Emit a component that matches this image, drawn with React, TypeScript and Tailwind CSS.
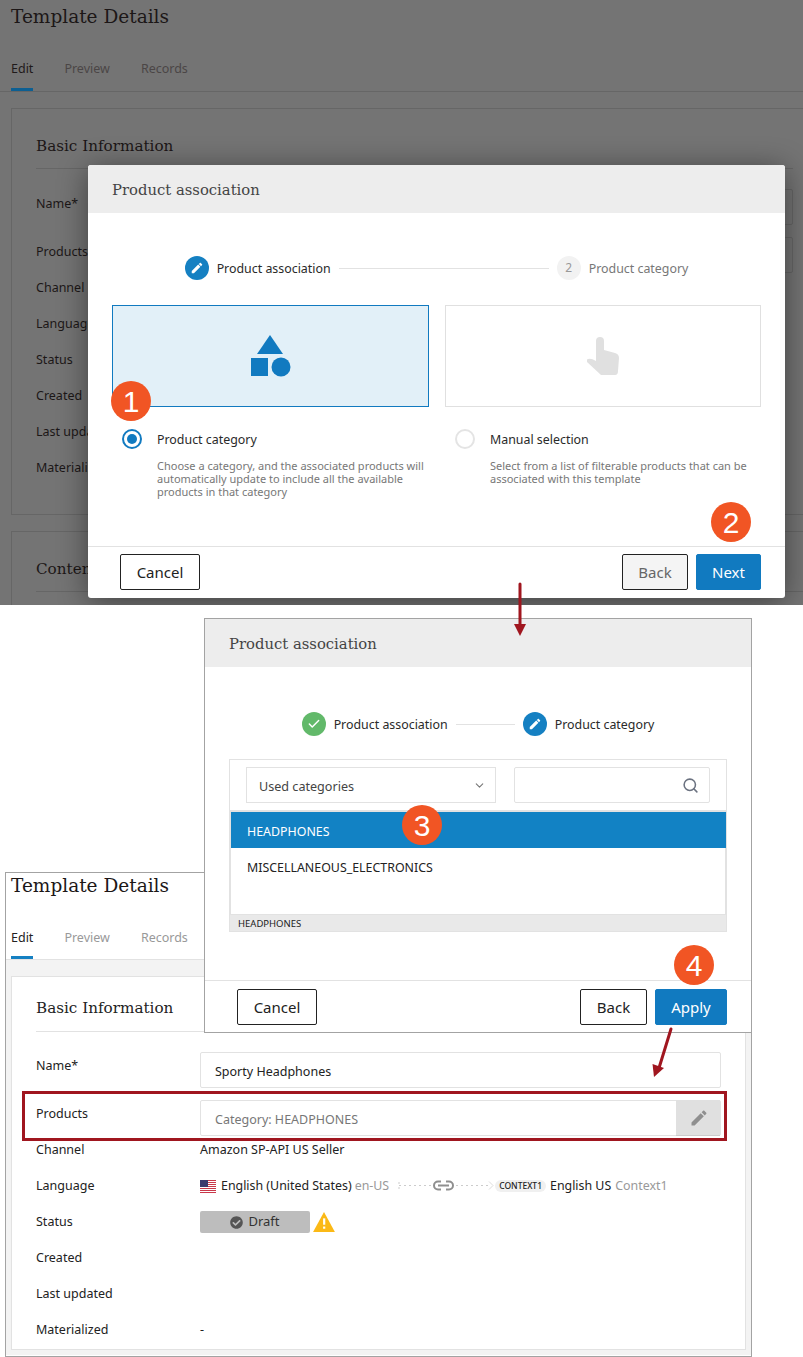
import type { ReactNode } from "react";
import { Check, ChevronDown, Search } from "lucide-react";
import { FaCheckCircle } from "react-icons/fa";

const ROWS = ["Channel", "Language", "Status", "Created", "Last updated", "Materialized"];

function PencilIcon({ className }: { className: string }) {
  return (
    <svg viewBox="0 0 24 24" className={className} fill="currentColor">
      <path d="M3 17.25V21h3.75L17.81 9.94l-3.75-3.75L3 17.25zM20.71 7.04c.39-.39.39-1.02 0-1.41l-2.34-2.34c-.39-.39-1.02-.39-1.41 0l-1.83 1.83 3.75 3.75 1.83-1.83z" />
    </svg>
  );
}

function HandIcon() {
  return (
    <svg viewBox="0 0 32 38" className="h-[38px] w-8 text-[#e0e0e0]" fill="currentColor">
      <path d="M9 4a4 4 0 0 1 8 0V13L28 16q4 1 4 5L31 34q0 4-3 4H14L0 25q-1-2 1-3q3-1 8 2Z" />
    </svg>
  );
}

function StepCircle({ kind }: { kind: "edit" | "done" | "todo" }) {
  if (kind === "done") {
    return (
      <span className="flex h-6 w-6 items-center justify-center rounded-full bg-[#62b96a] text-white">
        <Check size={14} strokeWidth={2.5} />
      </span>
    );
  }
  if (kind === "todo") {
    return <span className="flex h-6 w-6 items-center justify-center rounded-full bg-[#f2f2f2] text-[12px] text-[#999]">2</span>;
  }
  return (
    <span className="flex h-6 w-6 items-center justify-center rounded-full bg-[#1580c2] text-white">
      <PencilIcon className="h-[14px] w-[14px]" />
    </span>
  );
}

function Step({ kind, label, muted }: { kind: "edit" | "done" | "todo"; label: string; muted?: boolean }) {
  return (
    <div className="flex items-center gap-2">
      <StepCircle kind={kind} />
      <span className={muted ? "pt-[3px] text-[12.4px] text-[#777]" : "pt-[3px] text-[12.4px] text-[#2a2a2a]"}>{label}</span>
    </div>
  );
}

function ModalHeader() {
  return (
    <div className="flex h-12 items-center bg-[#ededed] px-6 pt-[2px] font-['DejaVu_Serif',serif] text-[14.8px] text-[#444]">
      Product association
    </div>
  );
}

function Button({ children, primary, muted, width }: { children: ReactNode; primary?: boolean; muted?: boolean; width: string }) {
  let cls = "border-[#222] bg-white text-[#222]";
  if (primary) cls = "border-[#117ac0] bg-[#117ac0] text-white";
  if (muted) cls = "border-[#222] bg-[#f4f4f4] text-[#666]";
  return <div className={`flex h-9 items-center justify-center rounded-[2px] border text-[15px] ${cls} ${width}`}>{children}</div>;
}

function ChoiceColumn({ active, title, text }: { active?: boolean; title: string; text: ReactNode }) {
  return (
    <div className="flex flex-col">
      <div
        className={
          active
            ? "flex h-[102px] items-center justify-center border border-[#117ac0] bg-[#e2f0f8]"
            : "flex h-[102px] items-center justify-center border border-[#e0e0e0] bg-white"
        }
      >
        {active ? (
          <svg viewBox="0 0 42 42" className="h-[42px] w-[42px] text-[#117ac0]" fill="currentColor">
            <path d="M20 0 L33 19 L7 19 Z" />
            <rect x="1" y="23" width="17" height="18" />
            <circle cx="31" cy="32" r="9.5" />
          </svg>
        ) : (
          <HandIcon />
        )}
      </div>
      <div className="mt-[22px] flex gap-[15px] pl-[10px]">
        {active ? (
          <span className="flex h-5 w-5 shrink-0 items-center justify-center rounded-full border-2 border-[#117ac0]">
            <span className="h-[10px] w-[10px] rounded-full bg-[#117ac0]" />
          </span>
        ) : (
          <span className="h-5 w-5 shrink-0 rounded-full border-2 border-[#e4e4e4]" />
        )}
        <div className="pt-px">
          <div className="text-[12.4px] leading-5 text-[#2a2a2a]">{title}</div>
          <div className="mt-[9px] text-[11px] leading-[13px] text-[#777]">{text}</div>
        </div>
      </div>
    </div>
  );
}

function Marker({ n, className }: { n: number; className: string }) {
  return (
    <div className={`absolute flex h-10 w-10 items-center justify-center rounded-full bg-[#f15524] font-['Liberation_Sans',sans-serif] text-[30px] text-white ${className}`}>
      {n}
    </div>
  );
}

function PageTabs({ dim }: { dim?: boolean }) {
  return (
    <div className={dim ? "flex h-[52px] items-end border-b border-[#666] pl-[11px]" : "flex h-[52px] items-end border-b border-[#e2e2e2] pl-[5px]"}>
      <div className="flex gap-[31px] text-[12.5px]">
        <div className={dim ? "h-[31px] border-b-[3px] border-[#0d5f92] text-[#1f1a1a]" : "h-[30px] border-b-[3px] border-[#1580c2] text-[#222]"}>Edit</div>
        <div className={dim ? "text-[#4b4646]" : "text-[#999]"}>Preview</div>
        <div className={dim ? "text-[#4b4646]" : "text-[#999]"}>Records</div>
      </div>
    </div>
  );
}

function TopWindow() {
  return (
    <div className="absolute left-0 top-0 h-[605px] w-[803px] overflow-hidden bg-[#747474]">
      <div className="h-[32px] pl-[11px] pt-px font-['DejaVu_Serif',serif] text-[18.5px] leading-[32px] text-[#1c1717]">Template Details</div>
      <div className="h-[8px]" />
      <PageTabs dim />
      <div className="ml-[11px] mt-[16px] h-[407px] w-[800px] border border-[#666] pl-6 pr-[17px] pt-[17px] text-[12.5px] text-[#1c1717]">
        <div className="h-[43px] border-b border-[#666] font-['DejaVu_Serif',serif] text-[15.2px] leading-[40px]">Basic Information</div>
        <div className="mt-5 flex h-9 items-start justify-between">
          <span className="pt-[6px]">Name*</span>
          <span className="h-9 w-[80px] rounded-[2px] border border-[#666]" />
        </div>
        <div className="mt-3 flex h-9 items-start justify-between">
          <span className="pt-[6px]">Products</span>
          <span className="h-9 w-[80px] rounded-[2px] border border-[#666]" />
        </div>
        <div className="-mt-[3px]">
          {ROWS.map((row) => (
            <div key={row} className="flex h-9 items-center">
              {row}
            </div>
          ))}
        </div>
      </div>
      <div className="ml-[11px] mt-[16px] h-[80px] w-[800px] border border-[#666] pl-6 pt-[26px]">
        <div className="h-[34px] border-b border-[#666] font-['DejaVu_Serif',serif] text-[15.2px] text-[#1c1717]">Content</div>
      </div>

      {/* modal */}
      <div className="absolute left-[88px] top-[165px] w-[697px] overflow-hidden rounded-[3px] bg-white shadow-[0_4px_30px_rgba(0,0,0,0.45)]">
        <ModalHeader />
        <div className="h-[333px] px-6">
          <div className="flex items-center justify-center gap-2 pt-[43px]">
            <Step kind="edit" label="Product association" />
            <span className="h-px w-[210px] bg-[#e2e2e2]" />
            <Step kind="todo" label="Product category" muted />
          </div>
          <div className="mt-[25px] grid grid-cols-[317px_316px] gap-4">
            <ChoiceColumn
              active
              title="Product category"
              text={
                <>
                  Choose a category, and the associated products will
                  <br />
                  automatically update to include all the available
                  <br />
                  products in that category
                </>
              }
            />
            <ChoiceColumn
              title="Manual selection"
              text={
                <>
                  Select from a list of filterable products that can be
                  <br />
                  associated with this template
                </>
              }
            />
          </div>
        </div>
        <div className="flex h-[52px] items-start justify-between border-t border-[#e2e2e2] pl-8 pr-6 pt-[7px]">
          <Button width="w-[80px]">Cancel</Button>
          <div className="flex gap-2">
            <Button muted width="w-[66px]">Back</Button>
            <Button primary width="w-[65px]">Next</Button>
          </div>
        </div>
      </div>
    </div>
  );
}

function CategoryWindow() {
  return (
    <div className="absolute left-[204px] top-[618px] z-10 h-[415px] w-[548px] border border-[#a3a3a3] bg-white">
      <ModalHeader />
      <div className="px-6">
        <div className="flex items-center justify-center gap-2 pt-[45px]">
          <Step kind="done" label="Product association" />
          <span className="h-px w-[59px] bg-[#e2e2e2]" />
          <Step kind="edit" label="Product category" />
        </div>
        <div className="mt-[23px] flex h-[173px] flex-col border border-[#e2e2e2]">
          <div className="flex h-[50px] gap-[18px] pl-4 pt-[7px]">
            <div className="flex h-9 w-[250px] items-center justify-between border border-[#e2e2e2] pl-3 pr-[9px] text-[12.6px] text-[#444]">
              <span className="pt-1">Used categories</span>
              <ChevronDown size={13} className="text-[#777]" />
            </div>
            <div className="flex h-9 w-[196px] items-center justify-end rounded-[2px] border border-[#e2e2e2] pr-[10px]">
              <Search size={17} strokeWidth={2.2} className="text-[#6b7280]" />
            </div>
          </div>
          <div className="flex-1 border-x border-[#e2e2e2] border-t-2 text-[12.4px]">
            <div className="-mr-px flex h-9 items-center bg-[#1282c4] pl-4 pt-1 text-white">HEADPHONES</div>
            <div className="flex h-9 items-center pl-4 pt-1 text-[#222]">MISCELLANEOUS_ELECTRONICS</div>
          </div>
          <div className="flex h-[17px] items-center border-t border-[#e2e2e2] bg-[#e9e9e9] pl-2 pt-[3px] text-[9.5px] text-[#222]">HEADPHONES</div>
        </div>
      </div>
      <div className="mt-[48px] flex h-[52px] items-start justify-between border-t border-[#e2e2e2] pl-8 pr-6 pt-[8px]">
        <Button width="w-[80px]">Cancel</Button>
        <div className="flex gap-2">
          <Button width="w-[67px]">Back</Button>
          <Button primary width="w-[72px]">Apply</Button>
        </div>
      </div>
    </div>
  );
}

function UsFlag() {
  return (
    <svg viewBox="0 0 16 13" className="h-[13px] w-4">
      <rect width="16" height="13" fill="#fff" />
      <rect width="16" height="1" fill="#c9384a" />
      <rect y="2" width="16" height="1" fill="#c9384a" />
      <rect y="4" width="16" height="1" fill="#c9384a" />
      <rect y="6" width="16" height="1" fill="#c9384a" />
      <rect y="8" width="16" height="1" fill="#c9384a" />
      <rect y="10" width="16" height="1" fill="#c9384a" />
      <rect y="12" width="16" height="1" fill="#c9384a" />
      <rect width="8" height="7" fill="#3c3b6e" />
    </svg>
  );
}

function LanguageLink() {
  return (
    <svg viewBox="0 0 97 14" className="h-[14px] w-[97px]" fill="none">
      <path d="M1 3v7M1 6.500h33M58 6.500h35" stroke="#ccc" strokeDasharray="2 3" />
      <path d="M91 2.500l4 4-4 4" stroke="#ddd" />
      <path d="M43 2.500h-3a4 4 0 0 0 0 8h3M48 2.500h3a4 4 0 0 1 0 8h-3M40 6.500h11" stroke="#8f8f8f" strokeWidth="2" />
    </svg>
  );
}

function ResultWindow() {
  return (
    <div className="absolute left-[5px] top-[872px] h-[485px] w-[747px] border border-[#a3a3a3] bg-white text-[12.5px] text-[#222]">
      <div className="h-[27px] pl-[5px] font-['DejaVu_Serif',serif] text-[18.5px] leading-[26px] text-[#1c1717]">Template Details</div>
      <div className="h-[8px]" />
      <PageTabs />
      <div className="h-[395px] bg-[#f3f3f3] px-[5px] pt-[16px]">
        <div className="h-[374px] border border-[#e2e2e2] bg-white px-6 pt-[11px]">
          <div className="h-[44px] border-b border-[#e2e2e2] font-['DejaVu_Serif',serif] text-[15.2px] leading-[40px]">Basic Information</div>
          <div className="mt-5 grid grid-cols-[164px_1fr] items-start">
            <span className="pt-[5px]">Name*</span>
            <div className="flex h-9 items-center rounded-[2px] border border-[#e2e2e2] pl-[14px] pt-1 text-[12.5px]">Sporty Headphones</div>
          </div>
          <div className="mt-3 grid grid-cols-[164px_1fr] items-start">
            <span className="pt-[5px]">Products</span>
            <div className="flex h-9 items-center justify-between rounded-[2px] border border-[#e2e2e2] pl-[14px] text-[12.5px] text-[#777]">
              <span className="pt-1">Category: HEADPHONES</span>
              <span className="flex h-9 w-[44px] items-center justify-center border-b border-[#ccc] bg-[#e0e0e0] text-[#8f8f8f]">
                <PencilIcon className="ml-px h-5 w-5" />
              </span>
            </div>
          </div>
          <div className="-mt-1 grid grid-cols-[164px_1fr] items-center [&>*]:h-9 [&>*]:flex [&>*]:items-center">
            <span>Channel</span>
            <span>Amazon SP-API US Seller</span>
            <span>Language</span>
            <span className="text-[12.4px]">
              <UsFlag />
              <span className="ml-[5px]">English (United States)</span>
              <span className="ml-[3px] text-[#999]">en-US</span>
              <span className="ml-[9px]"><LanguageLink /></span>
              <span className="rounded-full bg-[#f0f0f0] px-[4px] text-[8.5px] font-medium leading-3">CONTEXT1</span>
              <span className="ml-[4px]">English US</span>
              <span className="ml-[4px] text-[#999]">Context1</span>
            </span>
            <span>Status</span>
            <span>
              <span className="flex h-[22px] w-[110px] items-center justify-center gap-[5px] rounded-[2px] bg-[#bdbdbd] text-[13px] text-[#333]">
                <FaCheckCircle className="h-[13px] w-[13px] text-[#555]" />
                Draft
              </span>
              <svg viewBox="0 0 24 22" className="ml-[3px] h-5 w-[22px]">
                <path d="M12 0 L24 22 H0 Z" fill="#fbb916" />
                <rect x="11" y="7" width="2.4" height="7" fill="#fff" />
                <rect x="11" y="16" width="2.4" height="2.4" fill="#fff" />
              </svg>
            </span>
            <span>Created</span>
            <span />
            <span>Last updated</span>
            <span />
            <span>Materialized</span>
            <span>-</span>
          </div>
        </div>
      </div>
    </div>
  );
}

export default function App() {
  return (
    <div className="relative h-[1357px] w-[803px] overflow-hidden bg-white font-['Noto_Sans',sans-serif]">
      <TopWindow />
      <ResultWindow />
      <CategoryWindow />

      {/* callouts drawn over the screenshots */}
      <Marker n={1} className="left-[111px] top-[381px]" />
      <Marker n={2} className="left-[711px] top-[502px]" />
      <Marker n={3} className="left-[402px] top-[805px] z-20" />
      <Marker n={4} className="left-[674px] top-[945px] z-20" />
      <div className="absolute left-[22px] top-[1091px] z-20 h-[50px] w-[705px] border-[3px] border-[#a0161f]" />
      <svg className="absolute left-0 top-0 z-20 h-[1357px] w-[803px]" viewBox="0 0 803 1357" fill="none">
        <path d="M520 584V627" stroke="#a0161f" strokeWidth="3" strokeLinecap="round" />
        <path d="M514 624h12l-6 12z" fill="#a0161f" />
        <path d="M671 1029L659 1068" stroke="#a0161f" strokeWidth="3" strokeLinecap="round" />
        <path d="M652.500 1064l11.500 4-10 9z" fill="#a0161f" />
      </svg>
    </div>
  );
}
